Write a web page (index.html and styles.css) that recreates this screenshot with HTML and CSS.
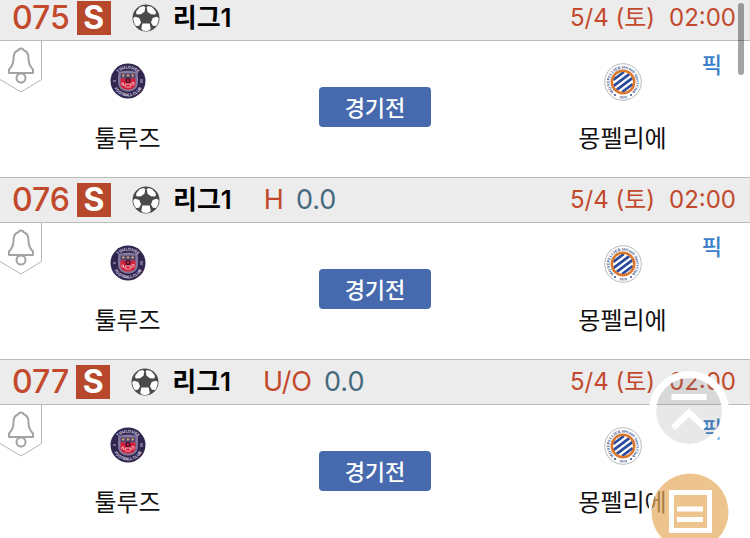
FILE: index.html
```html
<!DOCTYPE html>
<html lang="ko">
<head>
  <meta charset="UTF-8">
  <meta name="viewport" content="width=device-width, initial-scale=1">
  <title>리그1</title>
  <link rel="stylesheet" href="styles.css">
</head>
<body>

  <!-- shared icons -->
  <svg class="defs" width="0" height="0" aria-hidden="true">
    <symbol id="ball" viewBox="0 0 28 28">
      <circle cx="14" cy="14" r="13.5" fill="#4a4a4a"/>
      <g fill="#fff">
        <path d="M4.500 7l3.500-4 4-1 1.200 1.500-.7 4.200-3.500 2.600-4 .3-1-1.600z"/>
        <path d="M23.500 7l-3.500-4-4-1-1.200 1.500.7 4.200 3.500 2.600 4 .3 1-1.600z"/>
        <path d="M1.300 14l2-1.300 4 1.300 1.700 4.200-1.800 3.600-3.200.2C2.300 19.800 1.300 17 1.300 14z"/>
        <path d="M26.700 14l-2-1.300-4 1.300-1.700 4.200 1.800 3.600 3.200.2c1.700-2.200 2.700-5 2.700-8z"/>
        <path d="M10.300 19.500h7.400l1 5-1.400 2c-2.200.6-4.400.6-6.600 0l-1.400-2z"/>
      </g>
    </symbol>
    <symbol id="bell" viewBox="0 0 42 53">
      <path d="M41.500 0v38.500L21 51 0 38.500" fill="#fff" stroke="#b5b5b5"/>
      <g fill="none" stroke="#a3a3a3" stroke-width="2" stroke-linejoin="round">
        <path d="M9 32v-3.500c2.500-2.500 4.500-6 4.500-11 0-5 2-7.700 5.200-8.500 0-2 4.600-2 4.600 0 3.200.8 5.200 3.500 5.200 8.500 0 5 2 8.500 4.500 11V32z"/>
        <circle cx="21" cy="37" r="4.500"/>
      </g>
    </symbol>
    <symbol id="toulouse" viewBox="0 0 36 36">
      <circle cx="18" cy="18" r="17.500" fill="#30264f"/>
      <path d="M18 7.500c3.500 0 5.500 1 9.500 1.500.8 5 .8 11-.5 14.500-1.500 3.500-5 5-9 5s-7.500-1.500-9-5C7.700 20 7.700 14 8.500 9c4-.5 6-1.500 9.500-1.500z" fill="#84799b"/>
      <path d="M10.500 10.500h15v5h-15z" fill="#554470"/>
      <path d="M10.500 15.500h15v7c-1.500 3-4.500 4-7.500 4s-6-1-7.500-4z" fill="#d51f3b"/>
      <path d="M12 12.500h2.500M16.800 12.500h2.500M21.500 12.500H24M13.200 11v3M18 11v3M22.700 11v3" stroke="#c7a668"/>
      <circle cx="18" cy="17.500" r="2" fill="none" stroke="#3d1533" stroke-width="1.300"/>
      <path d="M12 22.500v-2.500h1.500v2.500h2V21h5v1.500H22v-3h2v3M15 24h6" fill="none" stroke="#f1a8b6"/>
      <path d="M3 18h3M30 17h3M30 19h3" stroke="#b7b0c8"/>
      <path id="tfcTop" d="M5.500 18a12.500 12.500 0 0 1 25 0" fill="none"/>
      <path id="tfcBottom" d="M2.500 18a15.500 15.500 0 0 0 31 0" fill="none"/>
      <g fill="#d9d4e4" font-family="Inter, sans-serif" font-size="4" font-weight="700" text-anchor="middle">
        <text><textPath href="#tfcTop" startOffset="50%">TOULOUSE</textPath></text>
        <text><textPath href="#tfcBottom" startOffset="50%">FOOTBALL CLUB</textPath></text>
      </g>
    </symbol>
    <symbol id="montpellier" viewBox="0 0 38 38">
      <circle cx="19" cy="19" r="18.300" fill="#fff" stroke="#bbb"/>
      <path d="M9.200 17L19.800 9M9.700 22.800L25.300 11.200M12.700 26.800L28.300 15.200M18.200 29L28.800 21" stroke="#2a4b9b" stroke-width="2.800"/>
      <circle cx="19" cy="19" r="11.200" fill="none" stroke="#da752c" stroke-width="2.500"/>
      <path id="mhscTop" d="M10.500 29.500a13.500 13.500 0 1 1 17 0" fill="none"/>
      <path id="mhscBottom" d="M9 32.500a17 17 0 0 0 20 0" fill="none"/>
      <g fill="#324b87" font-family="Liberation Serif, serif" font-size="4" font-weight="700" text-anchor="middle">
        <text><textPath href="#mhscTop" startOffset="50%">MONTPELLIER Hérault Sport Club</textPath></text>
        <text><textPath href="#mhscBottom" startOffset="50%">1974</textPath></text>
      </g>
      <circle cx="11" cy="32" r="1" fill="#324b87"/>
      <circle cx="27" cy="32" r="1" fill="#324b87"/>
    </symbol>
  </svg>

  <main class="match-list">
    <article class="match">
      <header class="match-head">
        <span class="match-no">075</span>
        <span class="badge">S</span>
        <svg class="ball"><use href="#ball"/></svg>
        <h2 class="league">리그1</h2>
        <time class="date"><span>5/4 (토)</span><span>02:00</span></time>
      </header>
      <div class="match-body">
        <button class="alarm" aria-label="알림"><svg><use href="#bell"/></svg></button>
        <div class="team">
          <svg class="logo"><use href="#toulouse" width="36" height="36" x="1"/></svg>
          <span>툴루즈</span>
        </div>
        <button class="status">경기전</button>
        <div class="team">
          <svg class="logo"><use href="#montpellier"/></svg>
          <span>몽펠리에</span>
        </div>
        <a class="pick" href="#">픽</a>
      </div>
    </article>

    <article class="match">
      <header class="match-head">
        <span class="match-no">076</span>
        <span class="badge">S</span>
        <svg class="ball"><use href="#ball"/></svg>
        <h2 class="league">리그1</h2>
        <span class="bet">H</span>
        <span class="line">0.0</span>
        <time class="date"><span>5/4 (토)</span><span>02:00</span></time>
      </header>
      <div class="match-body">
        <button class="alarm" aria-label="알림"><svg><use href="#bell"/></svg></button>
        <div class="team">
          <svg class="logo"><use href="#toulouse" width="36" height="36" x="1"/></svg>
          <span>툴루즈</span>
        </div>
        <button class="status">경기전</button>
        <div class="team">
          <svg class="logo"><use href="#montpellier"/></svg>
          <span>몽펠리에</span>
        </div>
        <a class="pick" href="#">픽</a>
      </div>
    </article>

    <article class="match">
      <header class="match-head">
        <span class="match-no">077</span>
        <span class="badge">S</span>
        <svg class="ball"><use href="#ball"/></svg>
        <h2 class="league">리그1</h2>
        <span class="bet">U/O</span>
        <span class="line">0.0</span>
        <time class="date"><span>5/4 (토)</span><span>02:00</span></time>
      </header>
      <div class="match-body">
        <button class="alarm" aria-label="알림"><svg><use href="#bell"/></svg></button>
        <div class="team">
          <svg class="logo"><use href="#toulouse" width="36" height="36" x="1"/></svg>
          <span>툴루즈</span>
        </div>
        <button class="status">경기전</button>
        <div class="team">
          <svg class="logo"><use href="#montpellier"/></svg>
          <span>몽펠리에</span>
        </div>
        <a class="pick" href="#">픽</a>
      </div>
    </article>
  </main>

  <div class="scroll-thumb"></div>

  <div class="floating">
    <button class="float-btn" aria-label="맨 위로">
      <svg viewBox="0 0 80 80">
        <circle cx="40" cy="40" r="33" fill="#757575" fill-opacity=".17"/>
        <circle cx="40" cy="40" r="36.500" fill="none" stroke="#fff" stroke-width="7"/>
        <path d="M22.500 26h35M24 57l16-15.500L56 57" fill="none" stroke="#fff" stroke-width="6"/>
      </svg>
    </button>
    <button class="float-btn" aria-label="목록">
      <svg viewBox="0 0 80 80">
        <circle cx="41" cy="40" r="40" fill="none" stroke="#fff" stroke-width="3"/>
        <circle cx="41" cy="40" r="38.500" fill="#e6ab5c" fill-opacity=".7"/>
        <path d="M22.500 20.500h38v38h-38zM28 37h26M28 47.500h26" fill="none" stroke="#fff" stroke-width="5"/>
      </svg>
    </button>
  </div>

</body>
</html>
```

FILE: styles.css
```css
* {
  box-sizing: border-box;
}
body {
  margin: 0;
  height: 100vh;
  overflow: hidden;
  background: #fff;
  color: #111;
  font-family: Inter, "Noto Sans CJK KR", sans-serif;
  font-size: 24px;
}
button {
  padding: 0;
  border: none;
  background: none;
  font-family: inherit;
  cursor: pointer;
}
svg {
  display: block;
}
.defs {
  position: absolute;
  visibility: hidden;
}
.match-list {
  margin-top: -5px;
}
.match-head {
  display: flex;
  align-items: center;
  height: 46px;
  padding: 0 14px 0 12px;
  background: #ececec;
  border-top: 1px solid #bbb;
  border-bottom: 1px solid #bbb;
  line-height: 34px;
}
.match-no {
  color: #c2492c;
  font-size: 32px;
  font-weight: 500;
}
.badge {
  width: 34px;
  height: 34px;
  margin-left: 7px;
  background: #b8482b;
  color: #fff;
  font-size: 32px;
  font-weight: 700;
  text-align: center;
}
.ball {
  width: 28px;
  height: 28px;
  margin-left: 21px;
}
.league {
  margin: 0 0 0 13px;
  color: #000;
  font-size: 26px;
  font-weight: 600;
}
.bet {
  margin-left: 32px;
  color: #c2492c;
  font-size: 27px;
}
.line {
  margin-left: 12px;
  color: #456a7d;
  font-size: 27px;
}
.date {
  display: flex;
  align-items: baseline;
  gap: 14px;
  margin-left: auto;
  color: #c2492c;
}
.match-body {
  position: relative;
  display: grid;
  grid-template-columns: 34% 1fr 34%;
  height: 136px;
}
.alarm {
  position: absolute;
  top: 0;
  left: 0;
}
.alarm svg {
  width: 42px;
  height: 53px;
}
.team {
  display: flex;
  flex-direction: column;
  align-items: center;
  gap: 20px;
  padding-top: 22px;
  line-height: 36px;
}
.logo {
  width: 38px;
  height: 38px;
}
.status {
  align-self: start;
  justify-self: center;
  width: 112px;
  height: 40px;
  margin-top: 46px;
  padding-bottom: 3px;
  border-radius: 4px;
  background: #476aae;
  color: #fff;
  font-size: 22px;
  font-weight: 500;
}
.pick {
  position: absolute;
  top: 8px;
  right: 28px;
  color: #3a7fc8;
  font-size: 22px;
  font-weight: 500;
  line-height: 32px;
  text-decoration: none;
}
.scroll-thumb {
  position: fixed;
  top: 3px;
  right: 6px;
  width: 6px;
  height: 72px;
  border-radius: 3px;
  background: rgba(0, 0, 0, 0.36);
}
.floating {
  position: fixed;
  right: 21px;
  bottom: -14px;
  display: flex;
  flex-direction: column;
  gap: 21px;
}
.float-btn svg {
  width: 80px;
  height: 80px;
}
```
